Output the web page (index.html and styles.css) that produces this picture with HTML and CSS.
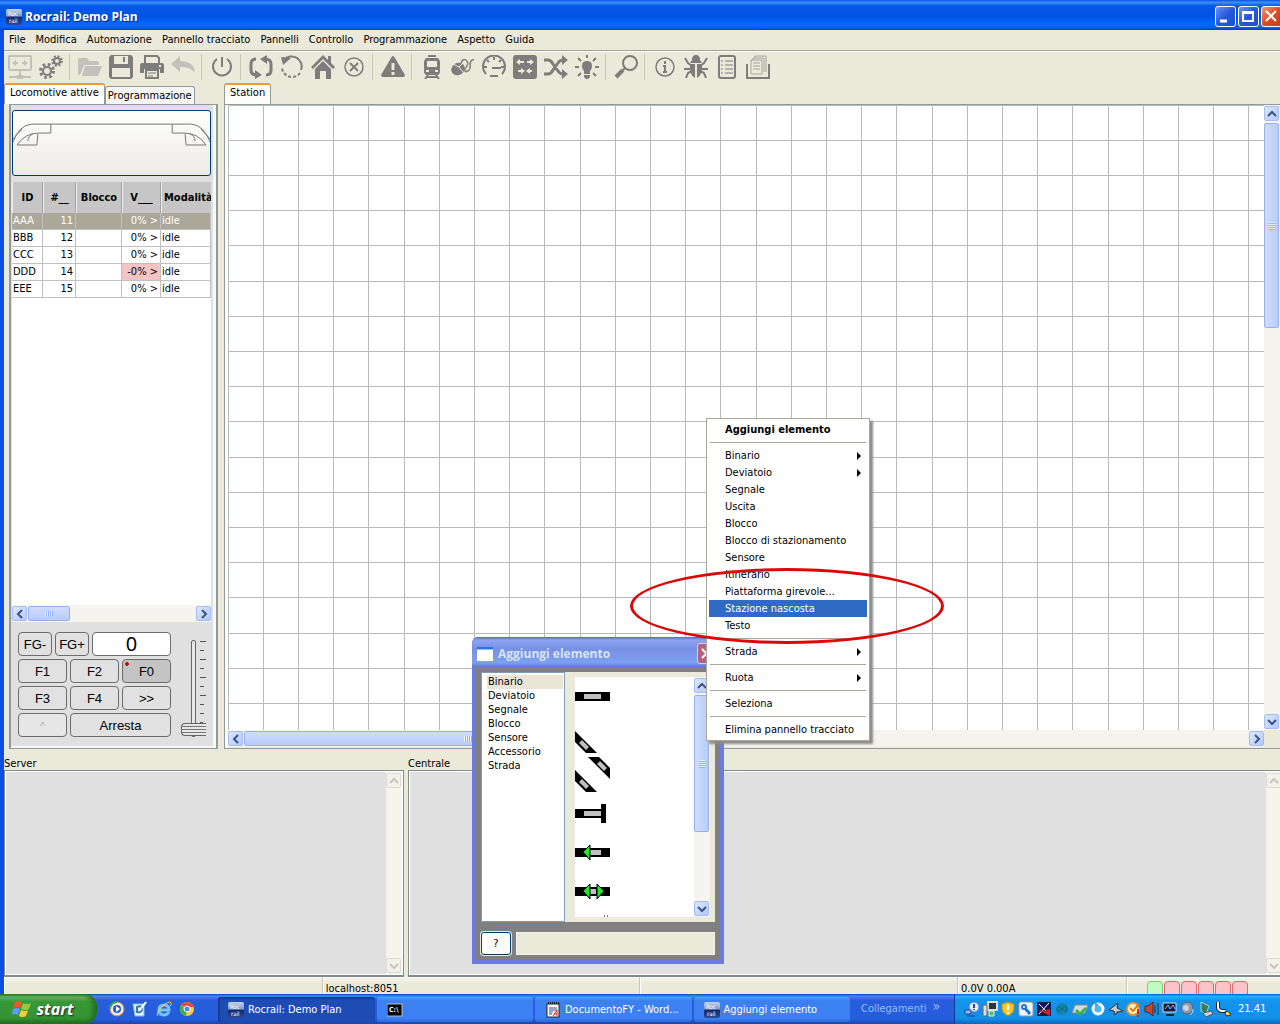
FILE: index.html
```html
<!DOCTYPE html>
<html lang="it">
<head>
  <meta charset="UTF-8">
  <title>Rocrail: Demo Plan</title>
  <link rel="stylesheet" href="styles.css">
</head>
<body>
  <svg class="defs" width="0" height="0">
    <linearGradient id="appfill" x1="0" y1="0" x2="0" y2="1"><stop offset="0" stop-color="#c4d4ec"/><stop offset=".45" stop-color="#8098c4"/><stop offset=".5" stop-color="#14286c"/><stop offset="1" stop-color="#304c90"/></linearGradient>
    <symbol id="app" viewBox="0 0 16 16">
      <rect width="16" height="16" rx="2" fill="url(#appfill)"/>
      <text x="2" y="7" font-size="6" fill="#fff">Roc</text><text x="3" y="14" font-size="6" fill="#fff">rail</text>
    </symbol>
    <symbol id="up" viewBox="0 0 10 10"><path d="M1 7l4-4 4 4" fill="none" stroke="currentColor" stroke-width="2"/></symbol>
    <symbol id="down" viewBox="0 0 10 10"><path d="M1 3l4 4 4-4" fill="none" stroke="currentColor" stroke-width="2"/></symbol>
    <symbol id="left" viewBox="0 0 10 10"><path d="M7 1L3 5l4 4" fill="none" stroke="currentColor" stroke-width="2"/></symbol>
    <symbol id="right" viewBox="0 0 10 10"><path d="M3 1l4 4-4 4" fill="none" stroke="currentColor" stroke-width="2"/></symbol>
  </svg>

  <div class="window">
    <header class="titlebar">
      <svg width="16" height="16"><use href="#app"/></svg>
      <h1>Rocrail: Demo Plan</h1>
      <button class="winbtn" aria-label="Riduci a icona"><svg width="19" height="19"><path d="M4 14h7" stroke="#fff" stroke-width="3"/></svg></button>
      <button class="winbtn" aria-label="Ingrandisci"><svg width="19" height="19"><path d="M4 5h10v9H4z M4 6h10" fill="none" stroke="#fff" stroke-width="2"/></svg></button>
      <button class="winbtn close" aria-label="Chiudi"><svg width="19" height="19"><path d="M4 4l10 10M14 4L4 14" stroke="#fff" stroke-width="2"/></svg></button>
    </header>

    <nav class="menubar">
      <button>File</button><button>Modifica</button><button>Automazione</button><button>Pannello tracciato</button><button>Pannelli</button><button>Controllo</button><button>Programmazione</button><button>Aspetto</button><button>Guida</button>
    </nav>

    <div class="toolbar">
      <button class="off" aria-label="Connetti"><svg viewBox="0 0 24 24"><rect x="1" y="1" width="22" height="14" rx="1"/><path d="M5 8h5M14 8h5M12 15v6M1 22h22" /><path class="f" d="M4 8l4-3v6zM20 8l-4-3v6zM9 20h6v4H9z"/></svg></button>
      <button aria-label="Proprietà"><svg viewBox="0 0 24 24"><circle cx="8" cy="16" r="4"/><circle cx="8" cy="16" r="6.500" stroke-dasharray="2.600 2.500" stroke-width="3"/><circle cx="18" cy="6" r="3"/><circle cx="18" cy="6" r="4.800" stroke-dasharray="2 1.770"/></svg></button>
      <i></i>
      <button class="off" aria-label="Apri"><svg viewBox="0 0 24 24"><path class="f" d="M0 5q0-2 2-2h7l2 3h8q2 0 2 2v2H6L2 20q-2 0-2-2zM7 11h17l-4 10H4z"/></svg></button>
      <button aria-label="Salva"><svg viewBox="0 0 24 24"><path class="f" fill-rule="evenodd" d="M2 0h20l2 2v20l-2 2H2l-2-2V2zM5 1v8h14V1zM3 13v9h18v-9z"/><path d="M15 2v5"/></svg></button>
      <button aria-label="Stampa"><svg viewBox="0 0 24 24"><path d="M5 8V1h12l2 2v5M6 15h12v8H6z"/><path class="f" fill-rule="evenodd" d="M2 8h20q2 0 2 2v8h-4v-4H4v4H0v-8q0-2 2-2zM19 10v2h2v-2z"/><path d="M8 18h8M8 21h5" stroke-width="1"/></svg></button>
      <button class="off" aria-label="Annulla"><svg viewBox="0 0 24 24"><path class="f" d="M0 9l9-8v5q14 0 15 12-5-7-15-6v5z"/></svg></button>
      <i></i>
      <button aria-label="Corrente"><svg viewBox="0 0 24 24"><path d="M7 4a9 9 0 1 0 10 0M12 2v10"/></svg></button>
      <i></i>
      <button aria-label="Automatico"><svg viewBox="0 0 24 24"><path d="M7 4q-5 0-5 5v6q0 5 6 5M17 20q5 0 5-5V9q0-5-6-5" stroke-width="3"/><path class="f" d="M6 15l7 5-7 4zM18 0l-7 4 7 5z"/></svg></button>
      <button aria-label="Ripristina"><svg viewBox="0 0 24 24"><path d="M4 5a10 10 0 0 1 17 10"/><path class="f" d="M1 2l10 1-8 7z"/><path d="M20 18a10 10 0 0 1-18-6" stroke-dasharray="3 2"/></svg></button>
      <button aria-label="Home"><svg viewBox="0 0 24 24"><path class="f" d="M0 12L12 0l5 5V1h3v7l4 4-2 2L12 4 2 14zM4 14l8-8 8 8v10h-5v-8h-6v8H4z"/></svg></button>
      <button aria-label="Annulla azione"><svg viewBox="0 0 24 24"><circle cx="12" cy="12" r="9" stroke-width="1.500"/><path d="M8 8l8 8M16 8l-8 8"/></svg></button>
      <i></i>
      <button aria-label="Emergenza"><svg viewBox="0 0 24 24"><path class="f" d="M12 1q1 0 2 2l10 17q0 2-2 2H2q-2 0-2-2L10 3q1-2 2-2z"/><path d="M12 8v7M12 17v3" stroke="#ebe9d9" stroke-width="3"/></svg></button>
      <i></i>
      <button aria-label="Locomotive"><svg viewBox="0 0 24 24"><path class="f" fill-rule="evenodd" d="M6 3h12l2 3v12l-2 2H6l-2-2V6zM7 6v6h10V6zM6 15v2h3v-2zM15 15v2h3v-2z"/><path d="M8 1h8M8 20l-3 4M16 20l3 4M6 22h12"/></svg></button>
      <button aria-label="Mouse"><svg viewBox="0 0 24 24"><ellipse class="f" cx="7" cy="14" rx="7" ry="6" transform="rotate(-35 7 14)"/><path d="M10 8q2-5 5-3 4 3-1 9-1 4 3 2 3-2 2-7 1-5 4-4" stroke-width="1.500"/><path d="M2 9q7 2 10 8M8 12l3-3" stroke="#ebe9d9" stroke-width="1"/></svg></button>
      <button aria-label="Velocità"><svg viewBox="0 0 24 24"><path d="M4 19a11 11 0 1 1 16 0M12 2v3M2 12h3M19 12h3M5 5l2 2M19 5l-2 2"/><path d="M10 13h9M8 21h8"/></svg></button>
      <button aria-label="Deviatoi"><svg viewBox="0 0 24 24"><rect class="f" width="24" height="24" rx="3"/><path d="M5 7h6M14 7h6M5 16h5M14 16h5" stroke="#ebe9d9"/><path d="M3 7l4-3v6zM21 7l-4-3v6zM12 16l-4-3v6zM13 16l4-3v6z" fill="#ebe9d9" stroke="none"/></svg></button>
      <button aria-label="Itinerari"><svg viewBox="0 0 24 24"><path d="M0 5h4q3 0 5 4l5 7q2 3 5 3M0 19h4q3 0 5-4l5-7q2-3 5-3" stroke-width="3"/><path class="f" d="M18 0l6 5-6 5zM18 14l6 5-6 5z"/></svg></button>
      <button aria-label="Luci"><svg viewBox="0 0 24 24"><path class="f" d="M12 6q5 0 5 5 0 3-2 5v3H9v-3q-2-2-2-5 0-5 5-5zM9 20h6v2l-2 2h-2l-2-2z"/><path d="M12 0v3M0 12h4M20 12h4M3 3l3 3M21 3l-3 3M3 21l3-3M21 21l-3-3"/></svg></button>
      <i></i>
      <button aria-label="Cerca"><svg viewBox="0 0 24 24"><circle cx="16" cy="8" r="7"/><path d="M11 13l-2 2"/><path d="M9 15l-7 7" stroke-width="4"/></svg></button>
      <i></i>
      <button aria-label="Informazioni"><svg viewBox="0 0 24 24"><circle cx="12" cy="12" r="9" stroke-width="1.500"/><path d="M12 10v7M12 6v3M10 11h2M10 17h4"/></svg></button>
      <button aria-label="Errori"><svg viewBox="0 0 24 24"><path class="f" d="M8 5q0-5 4-5t4 5l2 3H6zM6 9h5v14Q5 20 6 9zM18 9h-5v14q6-3 5-14z"/><path d="M1 3l3 5 4 3M23 3l-3 5-4 3M0 14h7M24 14h-7M2 23l2-5 4-2M22 23l-2-5-4-2"/></svg></button>
      <button aria-label="Registro"><svg viewBox="0 0 24 24"><rect x="4" y="1" width="16" height="22" rx="2"/><path d="M6 6h2M10 6h8M6 10h2M10 10h8M6 14h2M10 14h8M6 18h2M10 18h8" stroke-width="1"/></svg></button>
      <button aria-label="Documenti"><svg viewBox="0 0 24 24"><path d="M1 9v14h22V9"/><path d="M5 19V5h11v14zM7 5V3h11v14M9 3V1h11v16M7 8h7M7 11h7M7 14h7" stroke-width="1" opacity=".6"/></svg></button>
    </div>

    <main class="work">
      <section class="side">
        <div class="tabs"><button class="tab active">Locomotive attive</button><button class="tab">Programmazione</button></div>
        <div class="sidebox">
          <button class="loco" aria-label="Locomotiva">
            <svg viewBox="0 0 198 64"><path d="M0 31Q6 14 19 13h160q13 1 19 18M38 13v9H26Q12 22 4 34h20l1-11M160 13v9h12q14 0 22 12h-20l-1-11M15 30q0-5 5-7M183 30q0-5-5-7M0 28l9-10M198 28l-9-10" fill="none" stroke="#777"/></svg>
          </button>
          <div class="locolist">
            <table>
              <thead><tr><th class="c1">ID</th><th class="c2">#__</th><th class="c3">Blocco</th><th class="c4">V___</th><th class="c5">Modalità</th></tr></thead>
              <tbody>
                <tr class="sel"><td>AAA</td><td class="n">11</td><td></td><td class="n">0% &gt;</td><td>idle</td></tr>
                <tr><td>BBB</td><td class="n">12</td><td></td><td class="n">0% &gt;</td><td>idle</td></tr>
                <tr><td>CCC</td><td class="n">13</td><td></td><td class="n">0% &gt;</td><td>idle</td></tr>
                <tr><td>DDD</td><td class="n">14</td><td></td><td class="n rev">-0% &gt;</td><td>idle</td></tr>
                <tr><td>EEE</td><td class="n">15</td><td></td><td class="n">0% &gt;</td><td>idle</td></tr>
              </tbody>
            </table>
          </div>
          <div class="hscroll">
            <button aria-label="Sinistra"><svg width="10" height="10"><use href="#left"/></svg></button>
            <span class="thumb short"></span><span class="rest"></span>
            <button aria-label="Destra"><svg width="10" height="10"><use href="#right"/></svg></button>
          </div>
          <div class="throttle">
            <div class="keys">
              <div class="keyrow"><button class="fg">FG-</button><button class="fg">FG+</button><output>0</output></div>
              <div class="keyrow"><button>F1</button><button>F2</button><button class="lit">F0</button></div>
              <div class="keyrow"><button>F3</button><button>F4</button><button>&gt;&gt;</button></div>
              <div class="keyrow"><button class="up" disabled>^</button><button class="stop">Arresta</button></div>
            </div>
            <div class="speed">
              <input type="range" min="0" max="100" value="0" aria-label="Velocità">
              <svg width="6" height="84"><path d="M0 1h6M0 10h4M0 19h6M0 28h4M0 37h6M0 46h4M0 55h6M0 64h4M0 73h4M0 82h3" transform="translate(0 .5)" stroke="#555"/></svg>
            </div>
          </div>
        </div>
      </section>

      <section class="plan">
        <div class="tabs"><button class="tab active">Station</button></div>
        <div class="planbox">
          <svg class="grid" width="100%" height="100%">
            <pattern id="cells" width="176" height="176" patternUnits="userSpaceOnUse">
              <path d="M35 0v176M70 0v176M105 0v176M140 0v176M0 0v176M0 35h176M0 70h176M0 105h176M0 140h176M0 0h176" transform="translate(.5 .5)" stroke="#b9b9b9"/>
            </pattern>
            <rect width="100%" height="100%" fill="url(#cells)"/>
          </svg>
          <div class="vscroll">
            <button aria-label="Su"><svg width="10" height="10"><use href="#up"/></svg></button>
            <span class="thumb"></span><span class="rest"></span>
            <button aria-label="Giù"><svg width="10" height="10"><use href="#down"/></svg></button>
          </div>
          <div class="hscroll">
            <button aria-label="Sinistra"><svg width="10" height="10"><use href="#left"/></svg></button>
            <span class="thumb"></span><span class="rest"></span>
            <button aria-label="Destra"><svg width="10" height="10"><use href="#right"/></svg></button>
          </div>
        </div>
      </section>
    </main>

    <div class="logs">
      <section class="log server">
        <label for="server">Server</label>
        <div class="logbox"><textarea id="server" readonly></textarea>
          <div class="vscroll off"><button aria-label="Su" disabled><svg width="10" height="10"><use href="#up"/></svg></button><span class="rest"></span><button aria-label="Giù" disabled><svg width="10" height="10"><use href="#down"/></svg></button></div>
        </div>
      </section>
      <section class="log centrale">
        <label for="centrale">Centrale</label>
        <div class="logbox"><textarea id="centrale" readonly></textarea>
          <div class="vscroll off"><button aria-label="Su" disabled><svg width="10" height="10"><use href="#up"/></svg></button><span class="rest"></span><button aria-label="Giù" disabled><svg width="10" height="10"><use href="#down"/></svg></button></div>
        </div>
      </section>
    </div>

    <footer class="status">
      <span></span><span>localhost:8051</span><span></span><span>0.0V 0.00A</span>
      <span class="leds"><b class="ok"></b><b></b><b></b><b></b><b></b><b></b></span>
    </footer>
  </div>

  <div class="taskbar">
    <button class="start">
      <svg width="20" height="18" viewBox="0 0 20 18"><path d="M3 2q4-2 7 0L8 8Q5 6 1 8z" fill="#f0562b"/><path d="M11 3q4 2 8 0l-2 6q-4 2-8 0z" fill="#8bd03c"/><path d="M1 9q4-2 7 0l-2 6q-3-2-6 0z" fill="#5d9cf5"/><path d="M9 10q4 2 7 0l-2 6q-4 2-7 0z" fill="#fbce35"/></svg>
      start
    </button>
    <div class="quick">
      <button aria-label="Media Player"><svg viewBox="0 0 16 16"><circle cx="8" cy="8" r="7" fill="#e8eef8" stroke="#e87c28"/><path d="M1 8a7 7 0 0 1 7-7" stroke="#3ba848" stroke-width="2" fill="none"/><circle cx="8" cy="8" r="4" fill="#285bc4"/><path d="M7 5l4 3-4 3z" fill="#fff"/></svg></button>
      <button aria-label="Mostra desktop"><svg viewBox="0 0 16 16"><path d="M1 3h11v12H3z" fill="#e4f1fb" stroke="#84b7e2"/><path d="M5 6q5-2 5 2t-5 3z" fill="none" stroke="#2f7bb8" stroke-width="2"/><path d="M8 9l6-8" stroke="#fff" stroke-width="2"/></svg></button>
      <button aria-label="Internet Explorer"><svg viewBox="0 0 16 16"><path d="M13 11q-2 3-5 3-5 0-5-5t5-5 5 5H4" fill="none" stroke="#73c7fa" stroke-width="3"/><path d="M2 15Q-1 13 6 6t9-4q1 1-1 3" fill="none" stroke="#f5cf4d" stroke-width="1"/></svg></button>
      <button aria-label="Chrome"><svg viewBox="0 0 16 16"><circle cx="8" cy="8" r="7" fill="#f8cc3c"/><path d="M8 8L2 4q6-6 12 0v2H8z" fill="#df4b3c"/><path d="M2 4l6 6-1 5Q-2 13 2 4z" fill="#43a95a"/><circle cx="8" cy="8" r="3" fill="#4a87ee" stroke="#fff"/></svg></button>
    </div>
    <div class="tasks">
      <button class="pressed"><svg width="16" height="16"><use href="#app"/></svg><span>Rocrail: Demo Plan</span></button>
      <button aria-label="Prompt dei comandi"><svg width="16" height="16"><rect y="2" width="15" height="12" fill="#000" stroke="#bbb"/><text x="2" y="10" font-size="7" font-weight="bold" fill="#fff">C:\</text></svg></button>
      <button><svg width="16" height="16"><rect x="2" y="2" width="12" height="13" fill="#fff" stroke="#222"/><path d="M3 1h11" stroke="#222" stroke-width="2" stroke-dasharray="1 1"/><path d="M4 6h8M4 8h8M4 10h4M4 12h3" stroke="#36478c"/><path d="M8 14l4-6v6M9 12h3" stroke="#c22" fill="none"/></svg><span>DocumentoFY - Word...</span></button>
      <button><svg width="16" height="16"><use href="#app"/></svg><span>Aggiungi elemento</span></button>
    </div>
    <div class="links"><span>Collegamenti</span><b>»</b></div>
    <div class="tray">
      <svg viewBox="0 0 16 16"><circle cx="10" cy="6" r="5" fill="#e3ebff" stroke="#5c79c4"/><path d="M10 3v4M10 8v1" stroke="#2542b0" stroke-width="2"/><path d="M1 9h6v4H1zM3 15h8" fill="#99b6ee" stroke="#24439a"/></svg>
      <svg viewBox="0 0 16 16"><path d="M6 1h9v8H6z" fill="#334" stroke="#ddd" stroke-width="2"/><path d="M1 4h4v11H1z" fill="#ddd" stroke="#666"/><path d="M7 10h5v5H7z" fill="#4fc34c" stroke="#eee"/></svg>
      <svg viewBox="0 0 16 16"><path d="M8 1l6 2v5q0 4-6 7-6-3-6-7V3z" fill="#f5c92c" stroke="#b78c12"/><path d="M8 4v5M8 11v2" stroke="#fff" stroke-width="2"/></svg>
      <svg viewBox="0 0 16 16"><rect x="1" y="1" width="14" height="14" rx="2" fill="#eef4fc" stroke="#999"/><path d="M6 6l6 7" stroke="#2874c4" stroke-width="3"/><circle cx="6" cy="6" r="2" fill="#fff" stroke="#2874c4" stroke-width="2"/></svg>
      <svg viewBox="0 0 16 16"><path d="M1 1h14v14H1z" fill="#17184b"/><path d="M3 3l10 10M13 2L3 13" stroke="#fff"/><path d="M2 9l12 6V8l-6 2z" fill="#d5201d"/></svg>
      <svg viewBox="0 0 16 16"><circle cx="8" cy="8" r="6" fill="#1286a4"/><path d="M8 8q-4-5-5 0t5 0q4-5 5 0t-5 0z" fill="none" stroke="#0b6c8c"/></svg>
      <svg viewBox="0 0 16 16"><path d="M3 4h13l-3 8H0z" fill="#d9dcdf" stroke="#888"/><path d="M4 9l4 4 6-6" fill="none" stroke="#38b54a" stroke-width="3"/></svg>
      <svg viewBox="0 0 16 16"><circle cx="8" cy="8" r="5" fill="#4fb8f0" stroke="#fff" stroke-width="3"/><path d="M5 1l4 3-4 2z" fill="#3aa0ea"/></svg>
      <svg viewBox="0 0 16 16"><path d="M1 9l9-7-1 5 6 3-6 1-2 3-1-4z" fill="#c5cbd3" stroke="#333"/></svg>
      <svg viewBox="0 0 16 16"><circle cx="7" cy="8" r="6" fill="#fff2d0" stroke="#e4942b" stroke-width="2"/><path d="M4 7l3 3 6-7" fill="none" stroke="#e27d12" stroke-width="2"/><path d="M12 8v5M12 14v2" stroke="#d43114" stroke-width="2"/></svg>
      <svg viewBox="0 0 16 16"><path d="M1 5h3l5-4v14l-5-4H1z" fill="#c24a32" stroke="#661f16"/><path d="M11 4v8M14 2v12" stroke="#4b2024" stroke-width="1"/></svg>
      <svg viewBox="0 0 16 16"><path d="M1 2h13v9H1z" fill="#101c3c" stroke="#d5d5d5"/><path d="M3 8l3-4 2 4 3-4 2 4" fill="none" stroke="#8bd"/><path d="M4 14h8" stroke="#222" stroke-width="2"/></svg>
      <svg viewBox="0 0 16 16"><circle cx="7" cy="7" r="6" fill="#8b99a8" stroke="#56616d"/><circle cx="6" cy="7" r="3" fill="#cad4de"/><path d="M13 8q1 4-3 6" fill="none" stroke="#cde"/></svg>
      <svg viewBox="0 0 16 16"><path d="M3 1l8 4-3 8-5-3z" fill="#347e5b" stroke="#a8dcbc"/><path d="M5 12l8-2 2 3-7 3z" fill="#cbd3d2" stroke="#555"/></svg>
      <svg viewBox="0 0 16 16"><path d="M2 1v5q0 4 5 4h3" fill="none" stroke="#222" stroke-width="4"/><path d="M2 1v5q0 4 5 4h3" fill="none" stroke="#fff" stroke-width="2"/><path d="M9 10l4 1 2 3-5 1z" fill="#f5dc62" stroke="#333"/></svg>
      <time>21.41</time>
    </div>
  </div>

  <div class="dialog" role="dialog" aria-labelledby="dlgtitle">
    <div class="dlghead"><svg width="16" height="14"><rect width="16" height="14" fill="#fff"/><path d="M0 1h16" stroke="#2878e0" stroke-width="3"/></svg><h2 id="dlgtitle">Aggiungi elemento</h2><button aria-label="Chiudi"><svg width="18" height="18"><path d="M4 4l9 9M13 4l-9 9" stroke="#fff" stroke-width="2"/></svg></button></div>
    <div class="dlgbody">
      <div class="dlgmain">
        <ul class="kinds">
          <li class="on">Binario</li><li>Deviatoio</li><li>Segnale</li><li>Blocco</li><li>Sensore</li><li>Accessorio</li><li>Strada</li>
        </ul>
        <div class="preview">
          <svg width="36" height="240">
            <path d="M0 15h35v9H0z"/><path d="M9 17h17v5H9z" fill="#c0c0c0"/>
            <path d="M0 54l22 22H11L0 65z"/><path d="M7 63l7 7-3 3-7-7z" fill="#c0c0c0"/>
            <path d="M13 80h11l11 11v11z"/><path d="M25 84l7 7-3 3-7-7z" fill="#c0c0c0"/>
            <path d="M0 93l22 22H11L0 104z"/><path d="M7 102l7 7-3 3-7-7z" fill="#c0c0c0"/>
            <path d="M0 132h26v-5h5v19h-5v-5H0z"/><path d="M9 134h17v5H9z" fill="#c0c0c0"/>
            <path d="M0 171h35v9H0z"/><path d="M15 173h11v5H15z" fill="#c0c0c0"/><path d="M8 175l7-7v15z" fill="#1ee62a" stroke="#000"/>
            <path d="M0 210h35v9H0z"/><path d="M15 212h6v5h-6z" fill="#c0c0c0"/><path d="M8 214l7-7v15zM29 214l-7-7v15z" fill="#1ee62a" stroke="#000"/>
            <path d="M29 239h1M32 239h1" stroke="#000"/>
          </svg>
          <div class="vscroll">
            <button aria-label="Su"><svg width="10" height="10"><use href="#up"/></svg></button>
            <span class="thumb"></span><span class="rest"></span>
            <button aria-label="Giù"><svg width="10" height="10"><use href="#down"/></svg></button>
          </div>
        </div>
      </div>
      <div class="dlgfoot"><button>?</button><input type="text" aria-label="Elemento" readonly></div>
    </div>
  </div>

  <div class="context" role="menu">
    <strong>Aggiungi elemento</strong>
    <hr>
    <button class="more">Binario</button>
    <button class="more">Deviatoio</button>
    <button>Segnale</button>
    <button>Uscita</button>
    <button>Blocco</button>
    <button>Blocco di stazionamento</button>
    <button>Sensore</button>
    <button>Itinerario</button>
    <button>Piattaforma girevole...</button>
    <button class="hot">Stazione nascosta</button>
    <button>Testo</button>
    <hr>
    <button class="more">Strada</button>
    <hr>
    <button class="more">Ruota</button>
    <hr>
    <button>Seleziona</button>
    <hr>
    <button>Elimina pannello tracciato</button>
  </div>
  <div class="marker"></div>
</body>
</html>
```
FILE: styles.css
```css
* { box-sizing: border-box; }
body { margin: 0; min-height: 100vh; display: flex; flex-direction: column; position: relative; overflow: hidden; background: #ebe9d9; color: #000; font: 11px/14px "DejaVu Sans Condensed", "DejaVu Sans", sans-serif; }
button { font: inherit; color: inherit; padding: 0; border: 0; background: none; display: flex; align-items: center; justify-content: center; white-space: nowrap; }
svg { display: block; flex: none; }
.defs { position: absolute; }

.window { flex: 1; display: flex; flex-direction: column; min-width: 0; border-left: 4px solid #0a4ee4; }

/* title bar */
.titlebar { height: 30px; margin-left: -4px; padding: 3px 0 0 6px; display: flex; align-items: center; gap: 2px; overflow: hidden; color: #fff; background: linear-gradient(#0a50d8, #3c90fc 8%, #0458e4 20%, #0054e4 55%, #0468fc 80%, #0464fc 90%, #003cc0); }
.titlebar h1 { flex: 1; margin: 0 0 0 1px; font: bold 12px/18px "Open Sans", sans-serif; text-shadow: 1px 1px #0a2a80; }
.winbtn { width: 21px; height: 21px; border: 1px solid #fff; border-radius: 3px; background: linear-gradient(135deg, #6c94f4, #2458dc 50%, #1c50d0); }
.winbtn.close { margin-right: -2px; background: linear-gradient(135deg, #f09878, #dc4c24 50%, #cc3c14); }

.menubar { height: 21px; padding-left: 5px; display: flex; gap: 10px; border-bottom: 1px solid #a5a294; }

.toolbar { height: 32px; padding-bottom: 2px; display: flex; align-items: center; color: #7d7d7b; border-top: 1px solid #fff; }
.toolbar button { width: 31px; height: 28px; }
.toolbar .off { color: #c2c1bb; }
.toolbar svg { width: 24px; height: 24px; fill: none; stroke: currentColor; stroke-width: 2; }
.toolbar .f { fill: currentColor; stroke: none; }
.toolbar i { width: 8px; height: 26px; background: linear-gradient(90deg, #c9c6b2, #c9c6b2) 3px 0 / 1px 100% no-repeat; }

/* work area */
.work { flex: 1; display: flex; gap: 6px; min-height: 300px; }
.side { width: 214px; display: flex; flex-direction: column; }
.plan { flex: 1; min-width: 0; display: flex; flex-direction: column; }
.tabs { height: 21px; display: flex; align-items: flex-end; }
.tab { height: 18px; padding: 0 2px; border: 1px solid #919b9c; border-bottom: 0; border-radius: 3px 3px 0 0; background: #f6f6f2; }
.tab.active { height: 21px; padding: 0 5px 3px; border-top: 2px solid #ee9a30; background: #fcfcfa; }
.sidebox { flex: 1; margin-left: 5px; padding: 5px 5px 2px 1px; display: flex; flex-direction: column; border: 1px solid #919b9c; border-left-width: 2px; border-right: 2px solid #919b9c; background: #e0e0e0; box-shadow: inset -3px -2px #f8f8f6; }
.loco { height: 66px; margin-bottom: 6px; border: 1px solid #003c74; border-radius: 3px; background: linear-gradient(#fefefe, #ecebe6); }
.loco svg { width: 100%; height: 64px; }
.locolist { flex: 1; overflow: hidden; background: #fff; }
table { width: 100%; table-layout: fixed; border-collapse: separate; border-spacing: 0; }
th { height: 31px; padding: 0; border-right: 1px solid #a0a0a0; border-left: 1px solid #eee; background: #c6c6c6; white-space: nowrap; }
td { height: 17px; padding: 0 1px; border-right: 1px solid #c0c0c0; border-bottom: 1px solid #c0c0c0; white-space: nowrap; }
.c1 { width: 31px; }
.c2 { width: 33px; }
.c3 { width: 46px; }
.c4 { width: 39px; }
.c5 { padding-left: 2px; border-right: 0; text-align: left; }
.n { padding-right: 2px; text-align: right; }
.sel td { color: #fff; background: #aca899; }
.rev { background: #f4c4c4; }

/* scrollbars */
.hscroll, .vscroll { display: flex; background: #f5f4ef; }
.hscroll { height: 17px; }
.vscroll { width: 16px; flex-direction: column; }
.hscroll button, .vscroll button { flex: none; width: 15px; height: 15px; margin: 1px 0; border: 1px solid #a5bdf4; border-radius: 2px; color: #3c5484; background: linear-gradient(135deg, #dce8ff, #b4c8f8); }
.hscroll .rest, .vscroll .rest { flex: 1; }
.thumb { display: block; border: 1px solid #98b0e8; border-radius: 2px; background: #c4d4fc; }
.hscroll .thumb { width: 448px; margin: 1px; background: repeating-linear-gradient(90deg, #eef4ff 0 1px, #8cb0f8 1px 2px) center / 8px 6px no-repeat, linear-gradient(#d0dcff, #b8ccf8); }
.hscroll .short { width: 42px; }
.vscroll .thumb { height: 205px; margin: 1px 1px 1px 0; background: repeating-linear-gradient(#eef4ff 0 1px, #8cb0f8 1px 2px) center / 6px 8px no-repeat, linear-gradient(90deg, #d0dcff, #b8ccf8); }
.vscroll.off button { color: #c8c7bd; border-color: #dddcd2; background: #f2f1ea; }

/* throttle */
.throttle { height: 124px; padding: 10px 0 0 6px; display: flex; gap: 10px; }
.keys { width: 153px; display: flex; flex-direction: column; gap: 3px; font: 13px/16px "Liberation Sans", Arial, sans-serif; }
.keyrow { display: flex; gap: 3px; height: 24px; }
.keyrow button { flex: 1; padding-top: 2px; border: 1px solid #6c6c6c; border-radius: 4px; background: #e1e1e1; }
.keyrow .fg { flex: none; width: 34px; }
.keyrow output { flex: 1; border: 1px solid #6c6c6c; border-radius: 4px; background: #fff; text-align: center; font: 20px/22px "Noto Sans", sans-serif; }
.keyrow .lit { background: radial-gradient(circle at 4px 4px, #c81010 2px, #c4c4c4 2px); }
.keyrow .up { flex: none; width: 49px; color: #b0b0b0; background: #e6e6e6; font-size: 11px; }
.speed { display: flex; align-items: flex-start; margin-top: 8px; position: relative; }
.speed svg { position: absolute; left: 19px; top: 0; }
.speed input { appearance: none; writing-mode: vertical-lr; direction: rtl; width: 25px; height: 97px; margin: 0; background: none; }
.speed input::-webkit-slider-runnable-track { width: 5px; height: 97px; margin: 0 auto; border: 1px solid #666; border-radius: 2px; background: #e8e8e8; }
.speed input::-webkit-slider-thumb { appearance: none; width: 25px; height: 13px; margin-left: -11px; border: 1px solid #666; border-right: 0; border-radius: 4px 0 0 4px; background: repeating-linear-gradient(#e6e6e6 0 2px, #777 2px 3px); }

/* track plan */
.planbox { flex: 1; display: grid; grid-template: minmax(0, 1fr) 17px / minmax(0, 1fr) 16px; padding: 0 0 1px 3px; border: 1px solid #919b9c; border-right: 0; background: #ebe9d9; box-shadow: inset 3px 0 #fcfcfa; }
.grid { background: #fff; min-width: 0; }

/* server and command station output */
.logs { height: 228px; display: flex; gap: 4px; overflow: hidden; }
.log { flex: 1; display: flex; flex-direction: column; }
.server { flex: none; width: 400px; }
.centrale { margin-right: -4px; }
.log label { height: 21px; padding-top: 7px; line-height: 15px; }
.logbox { flex: 1; display: flex; border: 1px solid #808c8c; border-bottom-width: 2px; box-shadow: inset 0 0 0 1px #fff; padding: 1px; }
.logbox textarea { flex: 1; min-width: 0; padding: 0; border: 0; outline: 0; resize: none; background: #e0e0e0; }

.status { height: 17px; display: grid; grid-template-columns: 1fr 1fr 1fr 169px 154px; overflow: hidden; background: linear-gradient(#f8f7f0, #ebe9d9 6px); }
.status > span { padding: 4px 0 0 3px; height: 17px; border-left: 1px solid #c9c6b5; box-shadow: inset 1px 0 #fff; line-height: 15px; }
.status > span:first-child { border: 0; }
.status .leds { display: flex; padding-left: 20px; }
.leds b { width: 16px; height: 18px; margin-right: 1px; border: 1px solid #d46c6c; border-radius: 4px; background: #fcc4c8; }
.leds .ok { border-color: #7cc87c; background: #c0fcc0; }

/* taskbar */
.taskbar { height: 30px; display: flex; overflow: hidden; color: #fff; background: linear-gradient(#1c48b4, #4088f4 8%, #285edc 20%, #245cdc 85%, #1a44a8); }
.start { width: 97px; gap: 5px; padding-right: 12px; border-radius: 0 12px 12px 0; font: italic bold 16px/24px "Open Sans", sans-serif; text-shadow: 1px 1px 2px #222; background: linear-gradient(#2c7c2c, #60b860 10%, #389838 25%, #349434 80%, #206c20); box-shadow: inset -4px 0 5px #246c24; }
.quick { width: 121px; padding: 0 23px 0 12px; display: flex; justify-content: space-between; align-items: center; }
.quick button, .quick svg { width: 16px; height: 16px; }
.tasks { flex: 1; max-width: 632px; padding: 3px 0 2px; display: flex; gap: 2px; }
.tasks button { flex: 1 1 0; min-width: 0; padding-left: 10px; gap: 4px; justify-content: flex-start; border-radius: 3px; background: linear-gradient(#5c9cfc, #3c80f0 15%, #3c80f4 85%, #2c68d8); }
.tasks .pressed { background: #1c4cb4; box-shadow: inset 1px 1px 2px #0c2c78; }
.links { width: 104px; margin-left: auto; display: flex; padding: 8px 0 0 11px; gap: 6px; color: #9cbcf4; }
.links b { font: 14px/8px "DejaVu Sans Condensed", sans-serif; }
.tray { width: 326px; display: flex; align-items: center; gap: 2px; padding-left: 9px; border-left: 1px solid #0c3c98; background: linear-gradient(#0c60bc, #1cb4f8 8%, #1494ec 20%, #1290e8 80%, #0c68c0); }
.tray svg { width: 16px; height: 16px; }
.tray time { margin-left: 4px; }

/* "Aggiungi elemento" palette window */
.dialog { position: absolute; left: 472px; top: 637px; width: 252px; padding: 0 4px 4px; border-radius: 6px 6px 0 0; background: #6c7cdc; }
.dlghead { height: 30px; display: flex; align-items: center; gap: 5px; margin: 0 -4px; padding: 3px 8px 0 5px; border-radius: 6px 6px 0 0; background: linear-gradient(#5468c8, #8ca4f0 10%, #7890e4 40%, #7ca0f0 85%, #6478d4); }
.dlghead h2 { flex: 1; margin: 0; color: #d8e4f8; font: bold 12px/18px "Open Sans", sans-serif; }
.dlghead button { width: 19px; height: 21px; border: 1px solid #dcd0e8; border-radius: 3px; background: #b4647c; }
.dlgbody { padding: 5px; background: #808080; }
.dlgmain { display: flex; height: 250px; background: #ebe9d9; }
.kinds { width: 84px; margin: 0; padding: 2px 1px 0 5px; list-style: none; border: 1px solid #7f9db9; background: #fff; }
.kinds li { padding-left: 1px; }
.kinds .on { background: #ebe5d8; }
.preview { flex: 1; display: flex; justify-content: space-between; margin: 5px 5px 5px 10px; background: #fff; }
.preview .thumb { height: 137px; }
.dlgfoot { display: flex; gap: 5px; margin-top: 10px; height: 23px; }
.dlgfoot button { width: 30px; border: 1px solid #003c74; border-radius: 3px; background: #fbfbf8; box-shadow: 0 0 0 1px #ebe9d9; }
.dlgfoot input { flex: 1; min-width: 0; border: 1px solid #f4f2e8; background: #ebe9d9; }

/* context menu */
.context { position: absolute; left: 706px; top: 418px; width: 164px; padding: 2px; display: flex; flex-direction: column; border: 1px solid #aca899; background: #fff; box-shadow: 3px 3px 2px #8c8c8c; }
.context strong { padding-left: 16px; line-height: 17px; }
.context hr { height: 1px; margin: 4px 1px; border: 0; background: #aca899; align-self: stretch; }
.context button { height: 17px; padding: 0 6px 0 16px; justify-content: flex-start; }
.context .more::after { content: ""; margin-left: auto; border: 4px solid transparent; border-left-color: #000; border-right: 0; }
.context .hot { color: #fff; background: #316ac5; }
.marker { position: absolute; left: 630px; top: 568px; width: 314px; height: 76px; border: 3px solid #dc0808; border-radius: 50%; pointer-events: none; }
```
